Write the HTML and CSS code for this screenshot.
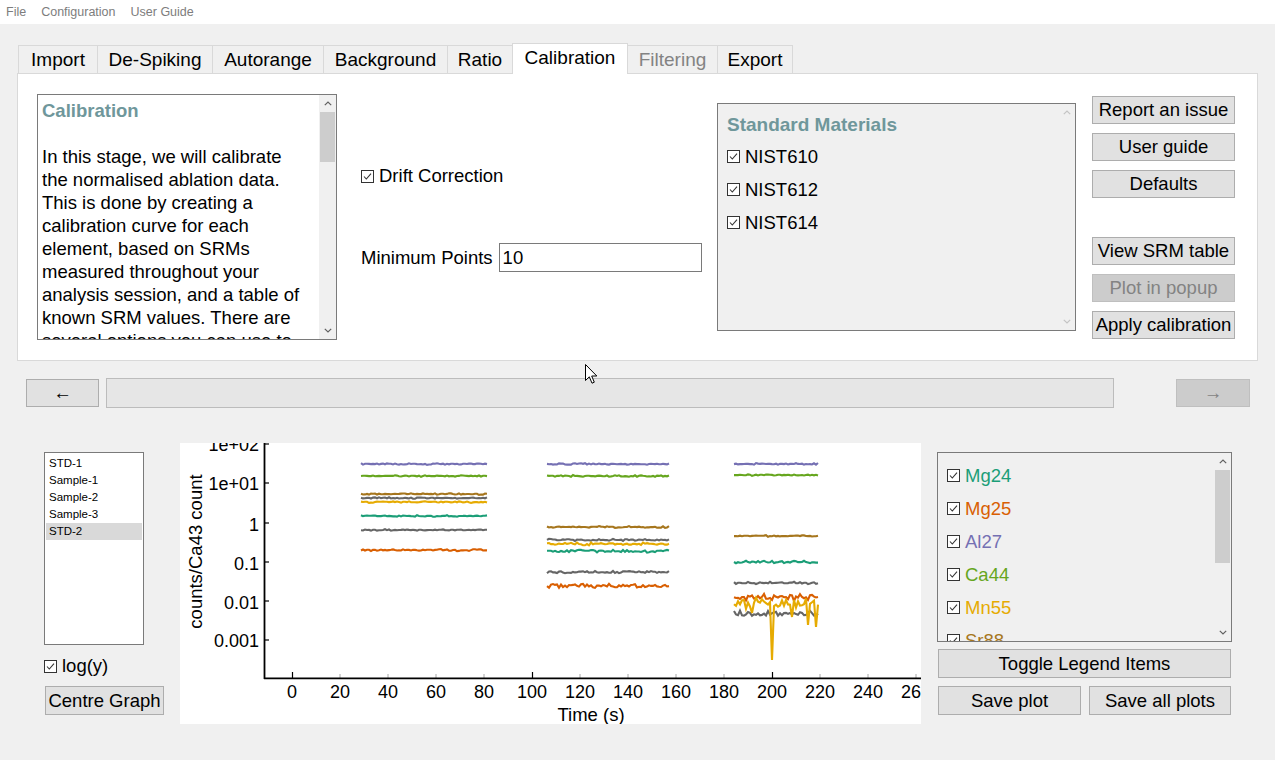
FILE: index.html
```html
<!DOCTYPE html>
<html lang="en">
<head>
<meta charset="utf-8">
<title>Calibration</title>
<link rel="stylesheet" href="styles.css">
</head>
<body>
<div class="menubar">
  <span>File</span><span>Configuration</span><span>User Guide</span>
</div>

<div class="tabwidget">
  <div class="tabbar">
    <div class="tab t-import">Import</div>
    <div class="tab t-despike">De-Spiking</div>
    <div class="tab t-autorange">Autorange</div>
    <div class="tab t-background">Background</div>
    <div class="tab t-ratio">Ratio</div>
    <div class="tab t-calibration active">Calibration</div>
    <div class="tab t-filtering disabled">Filtering</div>
    <div class="tab t-export">Export</div>
  </div>
  <div class="panel">
    <div class="info">
      <div class="info-text">
        <div class="info-title">Calibration</div>
        <p class="info-body">In this stage, we will calibrate<br>the normalised ablation data.<br>This is done by creating a<br>calibration curve for each<br>element, based on SRMs<br>measured throughout your<br>analysis session, and a table of<br>known SRM values. There are<br>several options you can use to</p>
      </div>
      <div class="vscroll">
        <div class="sb-arrow"><svg width="8" height="5" viewBox="0 0 8 5"><polyline points="0.8,4.2 4,1 7.2,4.2" fill="none" stroke="#606060" stroke-width="1.2"/></svg></div>
        <div class="sb-thumb info-thumb"></div>
        <div class="sb-track"></div>
        <div class="sb-arrow"><svg width="8" height="5" viewBox="0 0 8 5"><polyline points="0.8,0.8 4,4 7.2,0.8" fill="none" stroke="#606060" stroke-width="1.2"/></svg></div>
      </div>
    </div>

    <div class="middle">
      <div class="check drift">
        <svg class="cb" width="13" height="13" viewBox="0 0 13 13"><rect x="0.5" y="0.5" width="12" height="12" fill="#fff" stroke="#333"/><polyline points="3,6.5 5.3,9 10,3.6" fill="none" stroke="#333" stroke-width="1.1"/></svg>
        <span>Drift Correction</span>
      </div>
      <div class="minpts">
        <span>Minimum Points</span>
        <div class="input">10</div>
      </div>
    </div>

    <div class="srm">
      <div class="srm-list">
        <div class="srm-title">Standard Materials</div>
        <div class="check srm-item">
          <svg class="cb" width="13" height="13" viewBox="0 0 13 13"><rect x="0.5" y="0.5" width="12" height="12" fill="#fff" stroke="#333"/><polyline points="3,6.5 5.3,9 10,3.6" fill="none" stroke="#333" stroke-width="1.1"/></svg>
          <span>NIST610</span>
        </div>
        <div class="check srm-item">
          <svg class="cb" width="13" height="13" viewBox="0 0 13 13"><rect x="0.5" y="0.5" width="12" height="12" fill="#fff" stroke="#333"/><polyline points="3,6.5 5.3,9 10,3.6" fill="none" stroke="#333" stroke-width="1.1"/></svg>
          <span>NIST612</span>
        </div>
        <div class="check srm-item">
          <svg class="cb" width="13" height="13" viewBox="0 0 13 13"><rect x="0.5" y="0.5" width="12" height="12" fill="#fff" stroke="#333"/><polyline points="3,6.5 5.3,9 10,3.6" fill="none" stroke="#333" stroke-width="1.1"/></svg>
          <span>NIST614</span>
        </div>
      </div>
      <div class="vscroll faint">
        <div class="sb-arrow"><svg width="8" height="5" viewBox="0 0 8 5"><polyline points="0.8,4.2 4,1 7.2,4.2" fill="none" stroke="#c4c4c4" stroke-width="1.2"/></svg></div>
        <div class="sb-track"></div>
        <div class="sb-arrow"><svg width="8" height="5" viewBox="0 0 8 5"><polyline points="0.8,0.8 4,4 7.2,0.8" fill="none" stroke="#c4c4c4" stroke-width="1.2"/></svg></div>
      </div>
    </div>

    <div class="btncol">
      <div class="btn">Report an issue</div>
      <div class="btn">User guide</div>
      <div class="btn">Defaults</div>
      <div class="btn spaced">View SRM table</div>
      <div class="btn disabled">Plot in popup</div>
      <div class="btn">Apply calibration</div>
    </div>
  </div>
</div>

<div class="nav">
  <div class="btn nav-prev">&#8592;</div>
  <div class="progress"></div>
  <div class="btn disabled nav-next">&#8594;</div>
</div>

<div class="lower">
  <div class="leftcol">
    <div class="samples">
      <div class="sample">STD-1</div>
      <div class="sample">Sample-1</div>
      <div class="sample">Sample-2</div>
      <div class="sample">Sample-3</div>
      <div class="sample sel">STD-2</div>
    </div>
    <div class="check logrow">
      <svg class="cb" width="13" height="13" viewBox="0 0 13 13"><rect x="0.5" y="0.5" width="12" height="12" fill="#fff" stroke="#333"/><polyline points="3,6.5 5.3,9 10,3.6" fill="none" stroke="#333" stroke-width="1.1"/></svg>
      <span>log(y)</span>
    </div>
    <div class="btn centre">Centre Graph</div>
  </div>

  <svg class="plot" width="741" height="281" viewBox="0 0 741 281">
    <g id="series"></g>
    <g class="minor">
      <line x1="160" y1="235" x2="160" y2="231"/><line x1="208" y1="235" x2="208" y2="231"/>
      <line x1="256" y1="235" x2="256" y2="231"/><line x1="304" y1="235" x2="304" y2="231"/>
      <line x1="400" y1="235" x2="400" y2="231"/><line x1="448" y1="235" x2="448" y2="231"/>
      <line x1="496" y1="235" x2="496" y2="231"/><line x1="544" y1="235" x2="544" y2="231"/>
      <line x1="640" y1="235" x2="640" y2="231"/><line x1="688" y1="235" x2="688" y2="231"/>
      <line x1="736" y1="235" x2="736" y2="231"/>
    </g>
    <g class="major">
      <line x1="112.5" y1="235" x2="112.5" y2="229"/>
      <line x1="352.5" y1="235" x2="352.5" y2="229"/>
      <line x1="592.5" y1="235" x2="592.5" y2="229"/>
      <line x1="85" y1="1" x2="89" y2="1"/>
      <line x1="85" y1="40" x2="89" y2="40"/>
      <line x1="85" y1="80" x2="89" y2="80"/>
      <line x1="85" y1="119" x2="89" y2="119"/>
      <line x1="85" y1="158" x2="89" y2="158"/>
      <line x1="85" y1="197" x2="89" y2="197"/>
    </g>
    <g class="axis">
      <line x1="84.5" y1="0" x2="84.5" y2="236"/>
      <line x1="84" y1="235.3" x2="741" y2="235.3"/>
    </g>
    <g class="ylabels">
      <text x="79" y="8">1e+02</text>
      <text x="79" y="47">1e+01</text>
      <text x="79" y="87.5">1</text>
      <text x="79" y="126.5">0.1</text>
      <text x="79" y="165.5">0.01</text>
      <text x="79" y="204">0.001</text>
    </g>
    <g class="xlabels">
      <text x="112" y="254.5">0</text>
      <text x="160" y="254.5">20</text>
      <text x="208" y="254.5">40</text>
      <text x="256" y="254.5">60</text>
      <text x="304" y="254.5">80</text>
      <text x="352" y="254.5">100</text>
      <text x="400" y="254.5">120</text>
      <text x="448" y="254.5">140</text>
      <text x="496" y="254.5">160</text>
      <text x="544" y="254.5">180</text>
      <text x="592" y="254.5">200</text>
      <text x="640" y="254.5">220</text>
      <text x="688" y="254.5">240</text>
      <text x="736" y="254.5">260</text>
    </g>
    <text class="axtitle" x="411" y="278">Time (s)</text>
    <text class="axtitle" transform="translate(21.5,108.5) rotate(-90)">counts/Ca43 count</text>
  </svg>

  <div class="rightcol">
    <div class="legend">
      <div class="legend-items">
        <div class="check litem">
          <svg class="cb" width="13" height="13" viewBox="0 0 13 13"><rect x="0.5" y="0.5" width="12" height="12" fill="#fff" stroke="#333"/><polyline points="3,6.5 5.3,9 10,3.6" fill="none" stroke="#333" stroke-width="1.1"/></svg>
          <span class="c-teal">Mg24</span>
        </div>
        <div class="check litem">
          <svg class="cb" width="13" height="13" viewBox="0 0 13 13"><rect x="0.5" y="0.5" width="12" height="12" fill="#fff" stroke="#333"/><polyline points="3,6.5 5.3,9 10,3.6" fill="none" stroke="#333" stroke-width="1.1"/></svg>
          <span class="c-orange">Mg25</span>
        </div>
        <div class="check litem">
          <svg class="cb" width="13" height="13" viewBox="0 0 13 13"><rect x="0.5" y="0.5" width="12" height="12" fill="#fff" stroke="#333"/><polyline points="3,6.5 5.3,9 10,3.6" fill="none" stroke="#333" stroke-width="1.1"/></svg>
          <span class="c-purple">Al27</span>
        </div>
        <div class="check litem">
          <svg class="cb" width="13" height="13" viewBox="0 0 13 13"><rect x="0.5" y="0.5" width="12" height="12" fill="#fff" stroke="#333"/><polyline points="3,6.5 5.3,9 10,3.6" fill="none" stroke="#333" stroke-width="1.1"/></svg>
          <span class="c-green">Ca44</span>
        </div>
        <div class="check litem">
          <svg class="cb" width="13" height="13" viewBox="0 0 13 13"><rect x="0.5" y="0.5" width="12" height="12" fill="#fff" stroke="#333"/><polyline points="3,6.5 5.3,9 10,3.6" fill="none" stroke="#333" stroke-width="1.1"/></svg>
          <span class="c-yellow">Mn55</span>
        </div>
        <div class="check litem">
          <svg class="cb" width="13" height="13" viewBox="0 0 13 13"><rect x="0.5" y="0.5" width="12" height="12" fill="#fff" stroke="#333"/><polyline points="3,6.5 5.3,9 10,3.6" fill="none" stroke="#333" stroke-width="1.1"/></svg>
          <span class="c-brown">Sr88</span>
        </div>
      </div>
      <div class="vscroll">
        <div class="sb-arrow"><svg width="8" height="5" viewBox="0 0 8 5"><polyline points="0.8,4.2 4,1 7.2,4.2" fill="none" stroke="#606060" stroke-width="1.2"/></svg></div>
        <div class="sb-thumb legend-thumb"></div>
        <div class="sb-track"></div>
        <div class="sb-arrow"><svg width="8" height="5" viewBox="0 0 8 5"><polyline points="0.8,0.8 4,4 7.2,0.8" fill="none" stroke="#606060" stroke-width="1.2"/></svg></div>
      </div>
    </div>
    <div class="btn toggle">Toggle Legend Items</div>
    <div class="saverow">
      <div class="btn save">Save plot</div>
      <div class="btn saveall">Save all plots</div>
    </div>
  </div>
</div>

<svg class="cursor" width="13" height="21" viewBox="0 0 13 21"><path d="M0.5,0.5 L0.5,16.5 L4.3,12.8 L7,19.2 L9.3,18.2 L6.7,12 L11.8,12 Z" fill="#fff" stroke="#000" stroke-width="1" stroke-linejoin="miter"/></svg>

<script src="script.js"></script>
</body>
</html>
```

FILE: styles.css
```css
* { box-sizing: border-box; }
html, body { margin: 0; padding: 0; }
body {
  width: 1275px;
  height: 760px;
  overflow: hidden;
  position: relative;
  background: #f0f0f0;
  font-family: "Liberation Sans", Arial, sans-serif;
  font-size: 18.5px;
  color: #000;
}

/* menu */
.menubar {
  height: 24px;
  background: #fff;
  display: flex;
  align-items: center;
  gap: 15px;
  padding-left: 6px;
  font-size: 12.5px;
  color: #7d7d7d;
}

/* tabs */
.tabwidget { margin: 19px 0 0 17px; width: 1241px; }
.tabbar { display: flex; align-items: flex-end; height: 30px; padding-left: 1px; }
.tab {
  height: 28px;
  padding: 1px 0 0;
  display: flex;
  align-items: center;
  justify-content: center;
  border: 1px solid #d9d9d9;
  border-bottom: 0;
  margin-right: -1px;
  background: #f0f0f0;
  white-space: nowrap;
  font-size: 19px;
  flex: none;
}
.tab.active { height: 31px; margin-bottom: -1px; padding: 0 0 2px; background: #fff; position: relative; z-index: 1; }
.tab.disabled { color: #838383; }
.t-import { width: 80px; }
.t-despike { width: 116px; }
.t-autorange { width: 112px; }
.t-background { width: 125px; }
.t-ratio { width: 66px; }
.t-calibration { width: 116px; }
.t-filtering { width: 91px; }
.t-export { width: 76px; }

.panel {
  height: 288px;
  background: #fff;
  border: 1px solid #d9d9d9;
  display: flex;
  align-items: flex-start;
  padding: 20px 0 0 19px;
}

/* info box */
.info { width: 300px; height: 246px; border: 1px solid #7a7a7a; display: flex; background: #fff; flex: none; }
.info-text { flex: 1; overflow: hidden; padding: 4px 0 0 4px; line-height: 23px; }
.info-title { font-weight: bold; color: #6f979b; margin-bottom: 23px; }
.info-body { margin: 0; white-space: nowrap; }

/* scrollbars */
.vscroll { width: 17px; display: flex; flex-direction: column; background: #f0f0f0; flex: none; }
.vscroll.faint { background: transparent; }
.sb-arrow { height: 17px; display: flex; align-items: center; justify-content: center; flex: none; }
.sb-thumb { background: #cdcdcd; margin: 0 1px; flex: none; }
.info-thumb { height: 50px; }
.legend-thumb { height: 93px; }
.sb-track { flex: 1; }

/* checkbox rows */
.check { display: flex; align-items: center; gap: 5px; white-space: nowrap; }
.cb { display: block; flex: none; }

.middle { margin-left: 24px; width: 341px; display: flex; flex-direction: column; flex: none; }
.drift { margin-top: 70px; height: 24px; }
.minpts { margin-top: 55px; display: flex; align-items: center; gap: 6px; white-space: nowrap; }
.input {
  width: 203px;
  height: 29px;
  border: 1px solid #7a7a7a;
  padding-left: 3px;
  display: flex;
  align-items: center;
  background: #fff;
}

/* standard materials */
.srm {
  margin: 9px 0 0 15px;
  width: 359px;
  height: 228px;
  border: 1px solid #7a7a7a;
  background: #f0f0f0;
  display: flex;
  flex: none;
}
.srm-list { flex: 1; padding: 10px 0 0 9px; }
.srm-title { font-weight: bold; color: #6f979b; font-size: 19px; line-height: 22px; margin-bottom: 4px; }
.srm-item { height: 33px; }

/* buttons */
.btncol { margin: 2px 0 0 16px; width: 143px; display: flex; flex-direction: column; gap: 9px; flex: none; }
.btn {
  height: 28px;
  background: #e1e1e1;
  border: 1px solid #adadad;
  display: flex;
  align-items: center;
  justify-content: center;
  white-space: nowrap;
  flex: none;
}
.btn.disabled { background: #cccccc; border-color: #bfbfbf; color: #838383; }
.btncol .spaced { margin-top: 30px; }

/* navigation row */
.nav { display: flex; align-items: center; height: 30px; margin-top: 17px; padding-left: 26px; }
.nav-prev { width: 73px; height: 28px; }
.progress { margin-left: 7px; width: 1008px; height: 30px; background: #e6e6e6; border: 1px solid #bcbcbc; flex: none; }
.nav-next { margin-left: 62px; width: 74px; height: 28px; }

/* lower area */
.lower { display: flex; align-items: flex-start; margin-top: 35px; }
.leftcol { margin: 9px 0 0 44px; width: 120px; flex: none; }
.samples {
  width: 100px;
  height: 193px;
  background: #fff;
  border: 1px solid #7a7a7a;
  padding: 2px 1px;
  font-size: 11.5px;
  line-height: 17px;
}
.sample { padding-left: 3px; }
.sample.sel { background: #d9d9d9; }
.logrow { margin-top: 12px; height: 18px; }
.centre { margin: 11px 0 0 1px; width: 119px; height: 29px; }

.plot { margin-left: 16px; width: 741px; height: 281px; background: #fff; display: block; flex: none; overflow: hidden; }
.plot text { font-family: "Liberation Sans", Arial, sans-serif; font-size: 18px; fill: #000; }
.plot .ylabels text { text-anchor: end; }
.plot .xlabels text { text-anchor: middle; }
.plot .axtitle { text-anchor: middle; font-size: 18.5px; }
.plot .axis line { stroke: #000; stroke-width: 1.8; }
.plot .major line { stroke: #000; stroke-width: 1.2; }
.plot .minor line { stroke: #a8a8a8; stroke-width: 1; }
.plot .trace { fill: none; stroke-width: 2.1; stroke-linejoin: miter; }

.rightcol { margin: 9px 0 0 16px; width: 295px; flex: none; }
.legend { height: 190px; border: 1px solid #7a7a7a; background: #f0f0f0; display: flex; }
.legend-items { flex: 1; padding: 6px 0 0 9px; overflow: hidden; }
.litem { height: 33px; }
.c-teal { color: #1b9e77; }
.c-orange { color: #d95f02; }
.c-purple { color: #7570b3; }
.c-green { color: #66a61e; }
.c-yellow { color: #e6ab02; }
.c-brown { color: #a6761d; }
.toggle { margin: 7px 0 0 1px; width: 293px; height: 29px; }
.saverow { margin: 8px 0 0 1px; display: flex; gap: 8px; }
.save { width: 143px; height: 29px; }
.saveall { width: 142px; height: 29px; }

/* mouse pointer overlay */
.cursor { position: absolute; left: 585px; top: 364px; }
```

FILE: script.js
```js
(function () {
  var NS = 'http://www.w3.org/2000/svg';
  var g = document.getElementById('series');
  var s = 20240611;
  function rnd() { s = (s * 16807) % 2147483647; return (s - 1) / 2147483646; }
  function noise() { return (rnd() + rnd() + rnd() - 1.5); }

  var TEAL = '#1b9e77', ORANGE = '#d95f02', PURPLE = '#7570b3', GREEN = '#66a61e',
      YELLOW = '#e6ab02', BROWN = '#a6761d', GRAY = '#666666';

  var segments = [
    { x0: 181, x1: 307, lines: [
      [GRAY, 55, 0.7], [GRAY, 87, 0.7], [TEAL, 73, 0.7], [ORANGE, 107, 0.9],
      [PURPLE, 21, 0.8], [GREEN, 33, 0.7], [YELLOW, 59, 0.8], [BROWN, 51, 0.7]
    ]},
    { x0: 367, x1: 489, lines: [
      [GRAY, 97, 1.0], [GRAY, 129, 1.2], [TEAL, 108, 1.4], [ORANGE, 143, 2.2],
      [PURPLE, 21, 0.8], [GREEN, 33, 0.8], [YELLOW, 101, 1.4], [BROWN, 84, 0.8]
    ]},
    { x0: 554, x1: 638, lines: [
      [GRAY, 140, 1.4], [GRAY, 171, 3.2], [TEAL, 119, 1.4], [ORANGE, 154, 3.8],
      [PURPLE, 21, 0.7], [GREEN, 32, 0.7], [YELLOW, 160, 6, true], [BROWN, 93, 0.7]
    ]}
  ];

  segments.forEach(function (seg) {
    seg.lines.forEach(function (l) {
      var pts = [];
      for (var x = seg.x0; x <= seg.x1; x += 2) {
        var y = l[1] + noise() * l[2];
        if (l[3]) {
          if (x === 592) y = 217;
          else if (x === 628) y = 182;
          else if (x === 636) y = 184;
          else if (x === 612) y = 174;
          else if (x === 572) y = 170;
        }
        pts.push(x + ',' + y.toFixed(1));
      }
      var p = document.createElementNS(NS, 'polyline');
      p.setAttribute('points', pts.join(' '));
      p.setAttribute('class', 'trace');
      p.setAttribute('stroke', l[0]);
      g.appendChild(p);
    });
  });
})();
```
